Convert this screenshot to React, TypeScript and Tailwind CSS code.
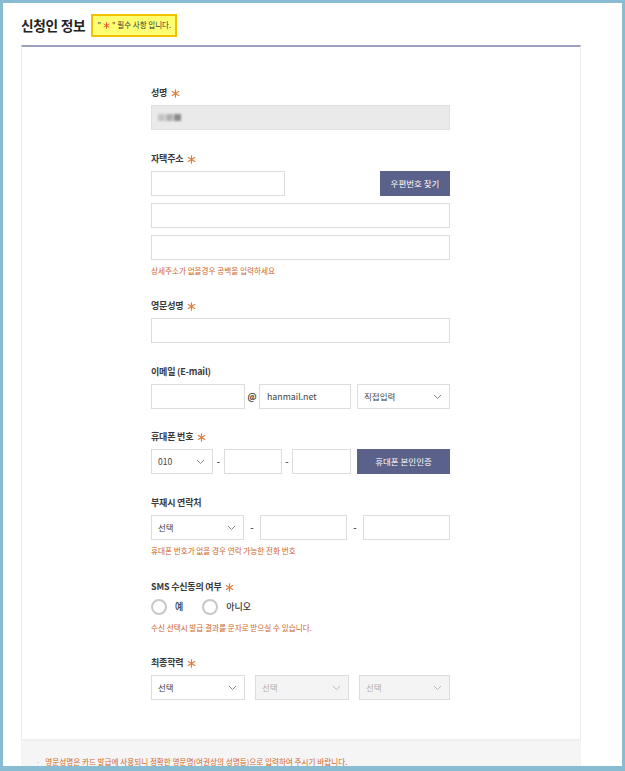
import React from 'react';

// six-spoke asterisk used for required marks
const Asterisk = ({ size = 9, color = '#e07a3c' }: { size?: number; color?: string }) => (
  <svg width={size} height={size} viewBox="0 0 10 10" className="inline-block shrink-0">
    <g stroke={color} strokeWidth="1.3" strokeLinecap="round">
      <line x1="5" y1="0.8" x2="5" y2="9.2" />
      <line x1="1.4" y1="2.9" x2="8.6" y2="7.1" />
      <line x1="1.4" y1="7.1" x2="8.6" y2="2.9" />
    </g>
  </svg>
);

const Star = () => (
  <span className="ml-[4px] inline-flex items-center">
    <Asterisk />
  </span>
);

const Chevron = ({ light = false }: { light?: boolean }) => (
  <svg width="9" height="6" viewBox="0 0 9 6" className="shrink-0">
    <polyline points="1,1 4.5,4.5 8,1" fill="none" stroke={light ? '#b8b8b8' : '#8a8a8a'} strokeWidth="1" />
  </svg>
);

const Label = ({ children }: { children: React.ReactNode }) => (
  <div className="h-[14px] flex items-center text-[9px] font-bold text-[#3a3a3a] tracking-[-0.2px] mb-[5px]">{children}</div>
);

const Hint = ({ children, mt = 'mt-[5px]' }: { children: React.ReactNode; mt?: string }) => (
  <div className={`${mt} h-[12px] leading-[12px] text-[7.6px] text-[#cf6529]`}>{children}</div>
);

const Input = ({ className = '', children }: { className?: string; children?: React.ReactNode }) => (
  <div className={`h-[25px] border border-[#dcdcdc] bg-white flex items-center px-[7px] text-[8.8px] text-[#444] ${className}`}>
    {children}
  </div>
);

const Select = ({ text, className = '', disabled = false }: { text: string; className?: string; disabled?: boolean }) => (
  <div
    className={`h-[25px] border border-[#dcdcdc] flex items-center justify-between pl-[6px] pr-[7px] text-[8.5px] ${
      disabled ? 'bg-[#f4f4f4] text-[#b0b0b0]' : 'bg-white text-[#444]'
    } ${className}`}
  >
    <span>{text}</span>
    <Chevron light={disabled} />
  </div>
);

const Dash = ({ className = '' }: { className?: string }) => (
  <div className={`flex items-center justify-center text-[9px] font-bold text-[#555] ${className}`}>-</div>
);

const Radio = ({ label }: { label: string }) => (
  <div className="flex items-center">
    <div className="w-[16px] h-[16px] rounded-full border-2 border-[#c8c8c8] bg-white" />
    <span className="ml-[8px] text-[9px] text-[#333] font-medium">{label}</span>
  </div>
);

export default function App() {
  return (
    <div
      className="w-[625px] h-[771px] overflow-hidden border-t-[3px] border-l-[3px] border-r-[3px] border-b-[5px] border-[#88bcd2] bg-white"
      style={{ fontFamily: '"Noto Sans CJK KR", "Noto Sans", sans-serif' }}
    >
      {/* Title */}
      <div className="flex items-center h-[42px] pl-[18px] pt-[2px]">
        <h2 className="text-[13.7px] font-bold text-[#222] tracking-[-0.3px]">신청인 정보</h2>
        <div className="ml-[6px] w-[86px] h-[23px] flex items-center justify-center bg-[#ffff72] border-2 border-[#f2c200] text-[7.5px] text-[#333]">
          "<span className="mx-[2px] inline-flex"><Asterisk size={7} color="#e2502a" /></span>" 필수 사항 입니다.
        </div>
      </div>

      {/* Panel */}
      <div className="ml-[18px] w-[560px]">
        <div className="border-t-2 border-[#9c9fbd] border-x border-x-[#ececec] border-b-2 border-b-[#efefef] bg-white pt-[39px] pb-[39px]">
          <div className="w-[299px] ml-[129px]">
            {/* 성명 */}
            <Label>
              성명<Star />
            </Label>
            <div className="h-[25px] bg-[#eaeaea] border border-[#e0e0e0] flex items-center pl-[6px]">
              <div className="flex gap-[1px] blur-[1px]">
                <div className="w-[7px] h-[7px] bg-[#c4c4c4]" />
                <div className="w-[7px] h-[7px] bg-[#b0b0b0]" />
                <div className="w-[7px] h-[7px] bg-[#8c8c8c]" />
              </div>
            </div>

            {/* 자택주소 */}
            <div className="mt-[22px]">
              <Label>
                자택주소<Star />
              </Label>
              <div className="flex justify-between">
                <Input className="w-[134px]" />
                <div className="w-[70px] h-[25px] bg-[#5a618a] text-white text-[8.5px] flex items-center justify-center">
                  우편번호 찾기
                </div>
              </div>
              <Input className="mt-[7px]" />
              <Input className="mt-[7px]" />
              <Hint>상세주소가 없을경우 공백을 입력하세요</Hint>
            </div>

            {/* 영문성명 */}
            <div className="mt-[22px]">
              <Label>
                영문성명<Star />
              </Label>
              <Input />
            </div>

            {/* 이메일 */}
            <div className="mt-[22px]">
              <Label>이메일 (E-mail)</Label>
              <div className="flex">
                <Input className="w-[94px]" />
                <div className="w-[14px] flex items-center justify-center text-[9px] font-bold text-[#333]">@</div>
                <Input className="w-[92px]">hanmail.net</Input>
                <Select text="직접입력" className="ml-[6px] w-[93px]" />
              </div>
            </div>

            {/* 휴대폰 번호 */}
            <div className="mt-[21px]">
              <Label>
                휴대폰 번호<Star />
              </Label>
              <div className="flex">
                <Select text="010" className="w-[62px]" />
                <Dash className="w-[11px]" />
                <Input className="w-[58px]" />
                <Dash className="w-[10px]" />
                <Input className="w-[59px]" />
                <div className="ml-[6px] w-[93px] h-[25px] bg-[#5a618a] text-white text-[8.5px] flex items-center justify-center">
                  휴대폰 본인인증
                </div>
              </div>
            </div>

            {/* 부재시 연락처 */}
            <div className="mt-[22px]">
              <Label>부재시 연락처</Label>
              <div className="flex">
                <Select text="선택" className="w-[93px]" />
                <Dash className="w-[16px]" />
                <Input className="w-[87px]" />
                <Dash className="w-[16px]" />
                <Input className="w-[87px]" />
              </div>
              <Hint>휴대폰 번호가 없을 경우 연락 가능한 전화 번호</Hint>
            </div>

            {/* SMS */}
            <div className="mt-[23px]">
              <Label>
                SMS 수신동의 여부<Star />
              </Label>
              <div className="flex gap-[19px]">
                <Radio label="예" />
                <Radio label="아니오" />
              </div>
              <Hint mt="mt-[7px]">수신 선택시 발급 결과를 문자로 받으실 수 있습니다.</Hint>
            </div>

            {/* 최종학력 */}
            <div className="mt-[22px]">
              <Label>
                최종학력<Star />
              </Label>
              <div className="flex gap-[10px]">
                <Select text="선택" className="w-[94px]" />
                <Select text="선택" className="w-[94px]" disabled />
                <Select text="선택" className="w-[91px]" disabled />
              </div>
            </div>
          </div>
        </div>

        {/* Footer notes */}
        <div className="bg-[#f5f5f5] pt-[15px] pb-[20px] pl-[15px]">
          <div className="flex items-center text-[7.6px] text-[#cf6529]">
            <span className="text-[#bbb] mr-[5px]">·</span>
            영문성명은 카드 발급에 사용되니 정확한 영문명(여권상의 성명등)으로 입력하여 주시기 바랍니다.
          </div>
        </div>
      </div>
    </div>
  );
}
